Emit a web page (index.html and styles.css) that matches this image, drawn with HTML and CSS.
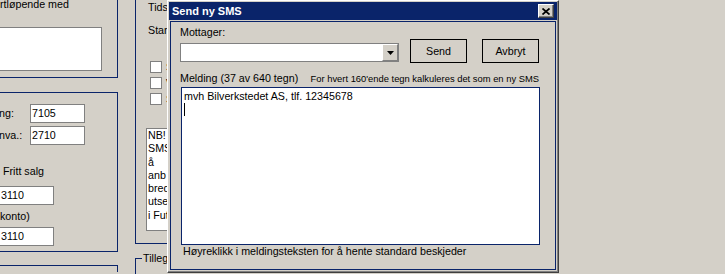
FILE: index.html
```html
<!DOCTYPE html>
<html lang="no">
<head>
  <meta charset="UTF-8">
  <meta name="viewport" content="width=device-width, initial-scale=1.0">
  <title>Send ny SMS</title>
  <link rel="stylesheet" href="styles.css">
</head>
<body>
  <div class="app">
    <div class="col-left">
      <div class="grp grp-a">
        <div class="cut-text">rtløpende med</div>
        <div class="memo-small"></div>
      </div>

      <div class="grp grp-b">
        <div class="field-row">
          <span class="row-label">ng:</span>
          <span class="field field-short">7105</span>
        </div>
        <div class="field-row row-two">
          <span class="row-label">nva.:</span>
          <span class="field field-short">2710</span>
        </div>
        <div class="sub-label first">&nbsp;Fritt salg</div>
        <div class="field field-cut">3110</div>
        <div class="sub-label">konto)</div>
        <div class="field field-cut last">3110</div>
      </div>

      <div class="grp grp-c"></div>
    </div>

    <div class="col-mid">
      <div class="grp grp-mid">
        <div class="mid-text">Tids</div>
        <div class="mid-text start">Star</div>
        <div class="checks">
          <label class="check"><span class="box"></span>S</label>
          <label class="check"><span class="box"></span>V</label>
          <label class="check"><span class="box"></span>S</label>
        </div>
        <div class="note">NB!<br>SMS<br>å<br>anb<br>bred<br>utse<br>i Fut</div>
      </div>
      <fieldset class="tilleg">
        <legend>Tilleg</legend>
      </fieldset>
    </div>
  </div>

  <div class="dialog">
    <div class="titlebar">
      <span class="title">Send ny SMS</span>
      <span class="close">
        <svg width="8" height="7" viewBox="0 0 8 7">
          <path d="M0.5 0.5 L7.5 6.5 M7.5 0.5 L0.5 6.5" stroke="#000" stroke-width="1.7" fill="none"/>
        </svg>
      </span>
    </div>

    <div class="client">
      <div class="label">Mottager:</div>
      <div class="recipient-row">
        <div class="combo">
          <div class="combo-input"></div>
          <div class="combo-btn">
            <svg width="7" height="4" viewBox="0 0 7 4">
              <path d="M0 0 H7 L3.5 4 Z" fill="#000"/>
            </svg>
          </div>
        </div>
        <button class="btn btn-send">Send</button>
        <button class="btn btn-cancel">Avbryt</button>
      </div>

      <div class="msg-head">
        <span>Melding (37 av 640 tegn)</span>
        <span class="hint">For hvert 160'ende tegn kalkuleres det som en ny SMS</span>
      </div>

      <div class="msg-box">
        <div>mvh Bilverkstedet AS, tlf. 12345678</div>
        <div><span class="caret"></span></div>
      </div>

      <div class="help">Høyreklikk i meldingsteksten for å hente standard beskjeder</div>
    </div>
  </div>
</body>
</html>
```

FILE: styles.css
```css
body {
  margin: 0;
  width: 725px;
  height: 274px;
  overflow: hidden;
  position: relative;
  background-color: #d4d0c8;
  font-family: 'Liberation Sans', Arial, sans-serif;
  font-size: 10.7px;
  line-height: 13px;
  color: #000000;
}

.app {
  display: flex;
  align-items: flex-start;
}

/* left column of the form behind the dialog */
.col-left {
  width: 118px;
  flex-shrink: 0;
}

.grp {
  box-sizing: border-box;
  border: 0 solid #0a246a;
}

.grp-a {
  height: 80px;
  border-right-width: 1px;
  border-bottom-width: 1px;
}

.cut-text {
  margin-top: -2px;
  white-space: nowrap;
}

.memo-small {
  margin-top: 16px;
  margin-left: -2px;
  width: 104px;
  height: 44px;
  box-sizing: border-box;
  background-color: #ffffff;
  border: 1px solid #808080;
}

.grp-b {
  margin-top: 14px;
  height: 160px;
  padding-top: 11px;
  border-top-width: 1px;
  border-right-width: 1px;
  border-bottom-width: 1px;
}

.field-row {
  display: flex;
  align-items: center;
}

.row-two {
  margin-top: 3px;
}

.row-label {
  width: 31px;
  margin-left: -1px;
  white-space: nowrap;
}

.field {
  display: block;
  box-sizing: border-box;
  height: 19px;
  line-height: 17px;
  padding-left: 1px;
  background-color: #ffffff;
  border: 1px solid #808080;
}

.field-short {
  width: 55px;
}

.field-cut {
  margin-left: -2px;
  width: 56px;
  padding-left: 2px;
  margin-top: 8px;
}

.field-cut.last {
  margin-top: 4px;
}

.sub-label {
  margin-top: 5px;
  white-space: nowrap;
}

.sub-label.first {
  margin-top: 20px;
}

.grp-c {
  margin-top: 13px;
  height: 7px;
  border-top-width: 1px;
  border-right-width: 1px;
}

/* middle column, mostly hidden by the dialog */
.col-mid {
  margin-left: 17px;
  width: 400px;
}

.grp-mid {
  height: 244px;
  padding-left: 12px;
  border-left-width: 1px;
  border-bottom-width: 1px;
}

.mid-text {
  padding-top: 1px;
}

.mid-text.start {
  margin-top: 9px;
}

.checks {
  margin-top: 24px;
  margin-left: 2px;
  display: flex;
  flex-direction: column;
  gap: 4px;
}

.check {
  display: flex;
  align-items: center;
  gap: 4px;
  height: 12px;
}

.box {
  width: 12px;
  height: 12px;
  box-sizing: border-box;
  background-color: #ffffff;
  border: 1px solid #808080;
}

.note {
  margin-top: 23px;
  margin-left: -2px;
  width: 60px;
  height: 103px;
  box-sizing: border-box;
  padding-left: 1px;
  line-height: 13.3px;
  background-color: #ffffff;
  border: 1px solid #808080;
  overflow: hidden;
}

.tilleg {
  margin: 8px 0 0 0;
  padding: 0 0 0 6px;
  height: 22px;
  box-sizing: border-box;
  border: 1px solid #0a246a;
  border-right: none;
  border-bottom: none;
}

.tilleg legend {
  padding: 0 1px;
  line-height: 13px;
}

/* the dialog window */
.dialog {
  position: absolute;
  left: 167px;
  top: 0;
  width: 392px;
  height: 273px;
  box-sizing: border-box;
  padding: 1px;
  border: 1px solid;
  border-color: #ffffff #404040 #404040 #ffffff;
  box-shadow: inset -1px -1px 0 #808080;
  background-color: #d4d0c8;
  display: flex;
  flex-direction: column;
}

.titlebar {
  height: 18px;
  flex-shrink: 0;
  display: flex;
  align-items: center;
  justify-content: space-between;
  padding: 0 3px 0 3px;
  background-color: #0a246a;
}

.title {
  color: #ffffff;
  font-weight: bold;
  font-size: 11px;
  line-height: 18px;
}

.close {
  width: 16px;
  height: 14px;
  box-sizing: border-box;
  display: flex;
  align-items: center;
  justify-content: center;
  background-color: #d4d0c8;
  border: 1px solid;
  border-color: #ffffff #404040 #404040 #ffffff;
  box-shadow: inset -1px -1px 0 #808080;
}

.client {
  margin: 1px 1px 0 1px;
  height: 249px;
  box-sizing: border-box;
  padding: 4px 0 0 9px;
  border: 1px solid #0a246a;
}

.recipient-row {
  display: flex;
  align-items: flex-start;
  height: 24px;
}

.combo {
  margin-top: 4px;
  margin-right: 11px;
  width: 219px;
  height: 19px;
  box-sizing: border-box;
  display: flex;
  background-color: #ffffff;
  border: 1px solid #808080;
}

.combo-input {
  flex: 1;
}

.combo-btn {
  width: 16px;
  box-sizing: border-box;
  display: flex;
  align-items: center;
  justify-content: center;
  background-color: #d4d0c8;
  border: 1px solid;
  border-color: #ffffff #808080 #808080 #ffffff;
}

.btn {
  width: 57px;
  height: 24px;
  padding: 0;
  box-sizing: border-box;
  font-family: inherit;
  font-size: 10.7px;
  color: #000000;
  background-color: #d4d0c8;
  border: 1px solid #000000;
}

.btn-cancel {
  margin-left: 15px;
}

.msg-head {
  margin-top: 9px;
  width: 359px;
  display: flex;
  align-items: baseline;
  justify-content: space-between;
}

.hint {
  font-size: 9.4px;
}

.msg-box {
  margin-top: 2px;
  margin-left: 1px;
  width: 359px;
  height: 158px;
  box-sizing: border-box;
  padding: 2px 2px 0 2px;
  background-color: #ffffff;
  border: 1px solid #0a246a;
}

.caret {
  display: inline-block;
  width: 1px;
  height: 13px;
  vertical-align: top;
  background-color: #000000;
}

.help {
  margin-left: 3px;
  white-space: nowrap;
}
```
